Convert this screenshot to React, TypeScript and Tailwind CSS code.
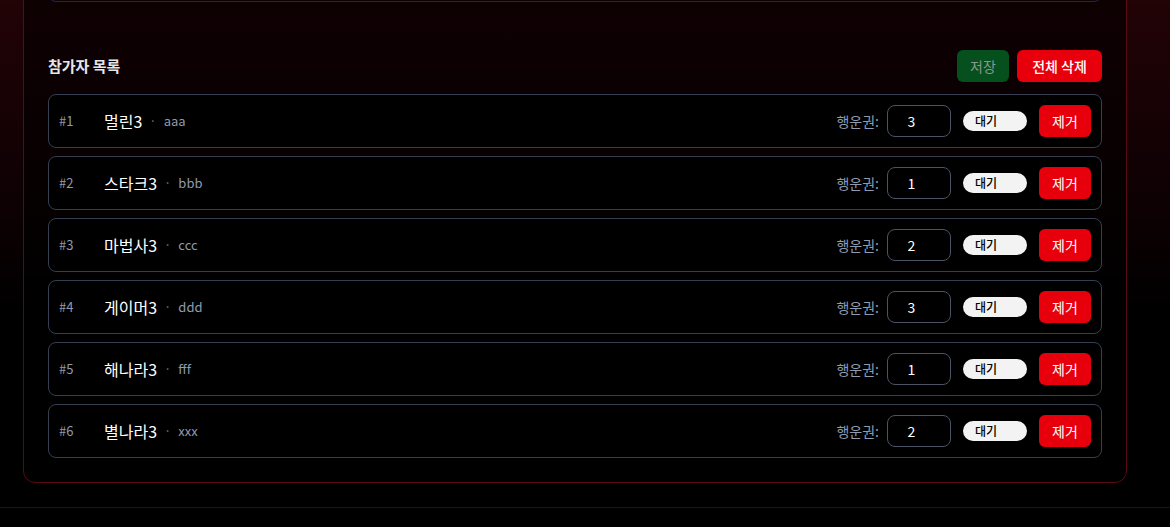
import { useState } from 'react'

type Participant = { id: number; name: string; userId: string; tickets: number }

const PARTICIPANTS: Participant[] = [
  { id: 1, name: '멀린3', userId: 'aaa', tickets: 3 },
  { id: 2, name: '스타크3', userId: 'bbb', tickets: 1 },
  { id: 3, name: '마법사3', userId: 'ccc', tickets: 2 },
  { id: 4, name: '게이머3', userId: 'ddd', tickets: 3 },
  { id: 5, name: '해나라3', userId: 'fff', tickets: 1 },
  { id: 6, name: '별나라3', userId: 'xxx', tickets: 2 },
]

function ParticipantRow({ p, index }: { p: Participant; index: number }) {
  const [tickets, setTickets] = useState(String(p.tickets))
  return (
    <div className="flex h-[54px] items-center rounded-lg border border-[#353f50] bg-black pl-2.5 pr-2.5">
      <span className="w-[45px] text-[13px] text-[#8e9bb0]">#{index + 1}</span>
      <span className="text-base text-white">{p.name}</span>
      <span className="mx-[7px] text-[13px] text-[#6b7585]">·</span>
      <span className="text-[13px] text-[#8e9bb0]">{p.userId}</span>
      <div className="ml-auto flex items-center">
        <span className="mr-2 text-sm text-[#8e9bb0]">행운권:</span>
        <input
          type="number"
          value={tickets}
          onChange={(e) => setTickets(e.target.value)}
          className="h-8 w-16 rounded-lg border border-[#4a5465] bg-black text-center text-sm text-white outline-none"
        />
        <div className="ml-3 flex h-5 w-16 items-center rounded-full bg-[#f3f3f3] pl-3 text-xs font-medium text-black">
          대기
        </div>
        <button className="ml-3 h-8 w-[52px] rounded-md bg-[#e7000b] text-sm text-white">제거</button>
      </div>
    </div>
  )
}

export default function App() {
  return (
    <div
      className="h-[527px] overflow-hidden bg-black bg-[linear-gradient(to_bottom,#220306_0%,#120104_30%,#000000_60%)]"
      style={{ fontFamily: '"Noto Sans CJK KR", "Noto Sans", sans-serif' }}
    >
      <div className="-mt-[61px] ml-[23px] w-[1104px] rounded-xl border border-[#5a0a12] bg-black/55 p-6">
        {/* previous card, scrolled off */}
        <div className="h-[38px] rounded-lg border border-[#1e2654]" />

        <div className="mt-12 flex items-center justify-between">
          <h2 className="text-[15px] font-bold text-[#e5e7eb]">참가자 목록</h2>
          <div className="flex gap-2">
            <button className="h-8 w-[52px] rounded-md bg-[#06501e] text-sm text-[#8a9690]">저장</button>
            <button className="h-8 w-[85px] rounded-md bg-[#e7000b] text-sm font-medium text-white">
              전체 삭제
            </button>
          </div>
        </div>

        <div className="mt-3 flex flex-col gap-2">
          {PARTICIPANTS.map((p, i) => (
            <ParticipantRow key={p.id} p={p} index={i} />
          ))}
        </div>
      </div>

      <div className="mt-[24px] border-t border-[#3a070c]" />
    </div>
  )
}
